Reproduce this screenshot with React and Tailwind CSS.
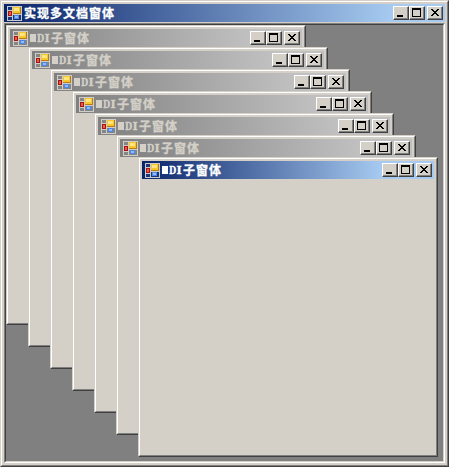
const CAPTION_FONT = "font-['Liberation_Serif','Noto_Sans_CJK_SC',serif]";

function FormIcon({ active }) {
  const line = active ? '#c9cacc' : '#d0cdc6';
  const hole = active ? '#1b3676' : '#858585';
  return (
    <svg className="block h-[15px] w-[15px] shrink-0" viewBox="0 0 15 15" shapeRendering="crispEdges">
      <rect width="15" height="15" fill={line} />
      <rect x="1" y="1" width="4" height="3" fill={hole} />
      <rect x="1" y="11" width="4" height="3" fill={hole} />
      <rect x="6" y="9" width="8" height="5" fill={hole} />
      <rect x="6" y="1" width="8" height="7" fill="#b97d10" />
      <rect x="6" y="1" width="7" height="6" fill="#f9c52e" />
      <rect x="7" y="2" width="5" height="3" fill="#ffe680" />
      <rect x="1" y="5" width="4" height="5" fill="#a31515" />
      <rect x="2" y="6" width="2" height="3" fill="#ee5a45" />
      <rect x="7" y="9" width="5" height="4" fill="#4d86e8" />
      <rect x="8" y="10" width="3" height="2" fill="#8fbcff" />
    </svg>
  );
}

function CaptionButton({ children, className = '' }) {
  return (
    <button
      className={`block h-[14px] w-4 shrink-0 border border-t-white border-l-white border-r-[#404040] border-b-[#404040] bg-[#d4d0c8] ${className}`}
    >
      <span className="block h-full w-full border-r border-b border-[#808080]">
        <svg className="block h-[11px] w-[13px]" viewBox="0 0 13 11" shapeRendering="crispEdges" fill="#000">
          {children}
        </svg>
      </span>
    </button>
  );
}

function TitleBar({ active, children }) {
  return (
    <div
      className={`flex h-[18px] shrink-0 items-start pr-[2px] pl-[3px] pt-[2px] ${
        active
          ? 'bg-[linear-gradient(to_right,#0a246a,#a6caf0_calc(100%-52px))] text-white'
          : 'bg-[linear-gradient(to_right,#808080,#c0c0c0_calc(100%-52px))] text-[#d4d0c8]'
      }`}
    >
      <FormIcon active={active} />
      <div
        className={`mt-px ml-[2px] flex h-[15px] min-w-0 flex-1 items-center text-[12px] leading-[15px] font-bold whitespace-nowrap [-webkit-text-stroke:0.3px_currentColor] ${CAPTION_FONT}`}
      >
        {children}
      </div>
      <CaptionButton>
        <rect x="3" y="8" width="6" height="2" />
      </CaptionButton>
      <CaptionButton>
        <path d="M2 1h9v9H2zM3 3v6h7V3z" fillRule="evenodd" />
      </CaptionButton>
      <CaptionButton className="ml-[2px]">
        <path d="M3 2h2v1h1v1h2V3h1V2h2v1h-1v1H9v1H8v1h1v1h1v1h1v1H9V8H8V7H6v1H5v1H3V8h1V7h1V6h1V5H5V4H4V3H3z" />
      </CaptionButton>
    </div>
  );
}

function WindowFrame({ className, children }) {
  return (
    <div
      className={`border border-t-[#d4d0c8] border-l-[#d4d0c8] border-r-[#404040] border-b-[#404040] bg-[#d4d0c8] ${className}`}
    >
      <div className="flex h-full w-full flex-col border border-t-white border-l-white border-r-[#808080] border-b-[#808080] p-[2px]">
        {children}
      </div>
    </div>
  );
}

// Cascaded child windows, back to front; positions are relative to the MDI client area.
const CHILDREN = [0, 22, 44, 66, 88, 110, 132];

export default function App() {
  return (
    <WindowFrame className="h-[467px] w-[449px] select-none">
      <TitleBar active>
        <span className="tracking-[1px]">实现多文档窗体</span>
      </TitleBar>
      <div className="mt-px min-h-0 flex-1 border border-t-[#808080] border-l-[#808080] border-r-white border-b-white">
        <div className="relative h-full w-full overflow-hidden border border-t-[#404040] border-l-[#404040] border-r-[#d4d0c8] border-b-[#d4d0c8] bg-[#808080]">
          {CHILDREN.map((offset, i) => (
            <div key={offset} className="absolute" style={{ left: offset, top: offset }}>
              <WindowFrame className="h-[300px] w-[300px]">
                <TitleBar active={i === CHILDREN.length - 1}>
                  <span className="mr-px mb-[3px] block h-2 w-[6px] bg-current text-[6px] leading-[8px]">M</span>
                  <span className="mb-[3px] block w-[7px] origin-left scale-x-[0.75] font-['DejaVu_Serif',serif] text-[11px]">D</span>
                  <span className="mb-[3px] block w-[7px] origin-left translate-x-[0.5px] font-['DejaVu_Serif',serif] text-[11px]">I</span>
                  <span className="tracking-[1px]">子窗体</span>
                </TitleBar>
              </WindowFrame>
            </div>
          ))}
        </div>
      </div>
    </WindowFrame>
  );
}
